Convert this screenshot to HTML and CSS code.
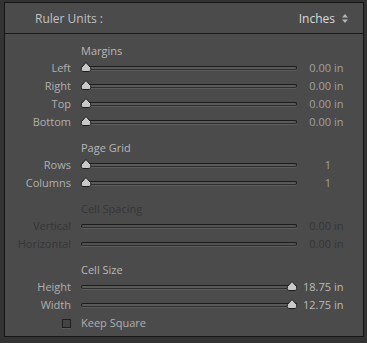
FILE: index.html
```html
<!DOCTYPE html>
<html>
<head>
  <meta charset="utf-8">
  <link rel="stylesheet" href="styles.css">
</head>
<body>
  <div class="panel">
    <div class="header">
      <span class="header-label">Ruler Units :</span>
      <span class="header-value">Inches
        <svg class="stepper" width="6" height="9" viewBox="0 0 6 9"><path d="M3 0 L6 3.5 H0 Z M3 9 L6 5.5 H0 Z" fill="#b4b4b4"/></svg>
      </span>
    </div>

    <div class="section">
      <div class="heading">Margins</div>
      <div class="row">
        <span class="label">Left</span>
        <div class="slider"><div class="track"></div><svg class="thumb" width="12" height="10" viewBox="0 0 12 10"><path d="M6 0.5 L10.5 5.5 Q11.8 9.5 8 9.5 H4 Q0.2 9.5 1.5 5.5 Z" fill="#c8c8c8" stroke="#1c1c1c"/></svg></div>
        <span class="value">0.00</span><span class="unit">in</span>
      </div>
      <div class="row">
        <span class="label">Right</span>
        <div class="slider"><div class="track"></div><svg class="thumb" width="12" height="10" viewBox="0 0 12 10"><path d="M6 0.5 L10.5 5.5 Q11.8 9.5 8 9.5 H4 Q0.2 9.5 1.5 5.5 Z" fill="#c8c8c8" stroke="#1c1c1c"/></svg></div>
        <span class="value">0.00</span><span class="unit">in</span>
      </div>
      <div class="row">
        <span class="label">Top</span>
        <div class="slider"><div class="track"></div><svg class="thumb" width="12" height="10" viewBox="0 0 12 10"><path d="M6 0.5 L10.5 5.5 Q11.8 9.5 8 9.5 H4 Q0.2 9.5 1.5 5.5 Z" fill="#c8c8c8" stroke="#1c1c1c"/></svg></div>
        <span class="value">0.00</span><span class="unit">in</span>
      </div>
      <div class="row">
        <span class="label">Bottom</span>
        <div class="slider"><div class="track"></div><svg class="thumb" width="12" height="10" viewBox="0 0 12 10"><path d="M6 0.5 L10.5 5.5 Q11.8 9.5 8 9.5 H4 Q0.2 9.5 1.5 5.5 Z" fill="#c8c8c8" stroke="#1c1c1c"/></svg></div>
        <span class="value">0.00</span><span class="unit">in</span>
      </div>
    </div>

    <div class="section">
      <div class="heading">Page Grid</div>
      <div class="row">
        <span class="label">Rows</span>
        <div class="slider"><div class="track"></div><svg class="thumb" width="12" height="10" viewBox="0 0 12 10"><path d="M6 0.5 L10.5 5.5 Q11.8 9.5 8 9.5 H4 Q0.2 9.5 1.5 5.5 Z" fill="#c8c8c8" stroke="#1c1c1c"/></svg></div>
        <span class="value">1</span><span class="unit"></span>
      </div>
      <div class="row">
        <span class="label">Columns</span>
        <div class="slider"><div class="track"></div><svg class="thumb" width="12" height="10" viewBox="0 0 12 10"><path d="M6 0.5 L10.5 5.5 Q11.8 9.5 8 9.5 H4 Q0.2 9.5 1.5 5.5 Z" fill="#c8c8c8" stroke="#1c1c1c"/></svg></div>
        <span class="value">1</span><span class="unit"></span>
      </div>
    </div>

    <div class="section disabled">
      <div class="heading">Cell Spacing</div>
      <div class="row">
        <span class="label">Vertical</span>
        <div class="slider"><div class="track"></div></div>
        <span class="value">0.00</span><span class="unit">in</span>
      </div>
      <div class="row">
        <span class="label">Horizontal</span>
        <div class="slider"><div class="track"></div></div>
        <span class="value">0.00</span><span class="unit">in</span>
      </div>
    </div>

    <div class="section">
      <div class="heading">Cell Size</div>
      <div class="row">
        <span class="label">Height</span>
        <div class="slider at-end"><div class="track"></div><svg class="thumb" width="12" height="10" viewBox="0 0 12 10"><path d="M6 0.5 L10.5 5.5 Q11.8 9.5 8 9.5 H4 Q0.2 9.5 1.5 5.5 Z" fill="#c8c8c8" stroke="#1c1c1c"/></svg></div>
        <span class="value bright">18.75</span><span class="unit bright">in</span>
      </div>
      <div class="row">
        <span class="label">Width</span>
        <div class="slider at-end"><div class="track"></div><svg class="thumb" width="12" height="10" viewBox="0 0 12 10"><path d="M6 0.5 L10.5 5.5 Q11.8 9.5 8 9.5 H4 Q0.2 9.5 1.5 5.5 Z" fill="#c8c8c8" stroke="#1c1c1c"/></svg></div>
        <span class="value bright">12.75</span><span class="unit bright">in</span>
      </div>
      <div class="row">
        <span class="check-cell"><span class="checkbox"></span></span>
        <span class="check-label">Keep Square</span>
      </div>
    </div>
  </div>
</body>
</html>
```

FILE: styles.css
```css
body {
  margin: 0;
  padding: 2px 0 0 4px;
  width: 367px;
  height: 343px;
  box-sizing: border-box;
  background: #333333;
  font-family: "Open Sans", "DejaVu Sans", sans-serif;
  font-size: 11px;
  color: #aaaaaa;
}

.panel {
  width: 360px;
  height: 335px;
  box-sizing: border-box;
  background: #4b4b4b;
  border: 1px solid #161616;
}

.header {
  display: flex;
  align-items: center;
  justify-content: space-between;
  height: 30px;
  padding: 0 15px 0 30px;
  border-bottom: 1px solid #1a1a1a;
  font-size: 12px;
}

.header-label {
  color: #c2c2c2;
}

.header-value {
  display: flex;
  align-items: center;
  gap: 7px;
  color: #dadada;
}

.section {
  margin-top: 8px;
}

.section:first-of-type {
  margin-top: 5px;
}

.heading {
  height: 17px;
  line-height: 17px;
  padding-left: 76px;
  color: #b8b8b8;
}

.row {
  display: grid;
  grid-template-columns: 76px 216px 34px 20px;
  align-items: center;
  height: 18px;
  line-height: 16px;
}

.label {
  padding-right: 10px;
  text-align: right;
  color: #b0b0b0;
}

.slider {
  position: relative;
  height: 18px;
  display: flex;
  align-items: center;
}

.track {
  width: 100%;
  height: 2px;
  background: #5a5a5a;
  border: 1px solid #1c1c1c;
  border-bottom-color: #2e2e2e;
  border-radius: 3px;
  box-shadow: 0 1px 0 #5c5c5c;
}

.thumb {
  position: absolute;
  left: -1px;
  top: 3px;
}

.slider.at-end .thumb {
  left: auto;
  right: -1px;
}

.value {
  text-align: right;
  color: #a0a0a0;
}

.unit {
  padding-left: 3px;
  color: #a0a0a0;
}

.bright {
  color: #bababa;
}

.disabled .heading,
.disabled .label,
.disabled .value,
.disabled .unit {
  color: #363636;
}

.disabled .track {
  background: #525252;
}

.check-cell {
  display: flex;
  justify-content: flex-end;
  padding-right: 10px;
}

.checkbox {
  width: 7px;
  height: 7px;
  border: 1px solid #1e1e1e;
  background: #444444;
  box-shadow: 0 1px 0 #5a5a5a;
}

.check-label {
  grid-column: 2 / 5;
  color: #b0b0b0;
}
```
